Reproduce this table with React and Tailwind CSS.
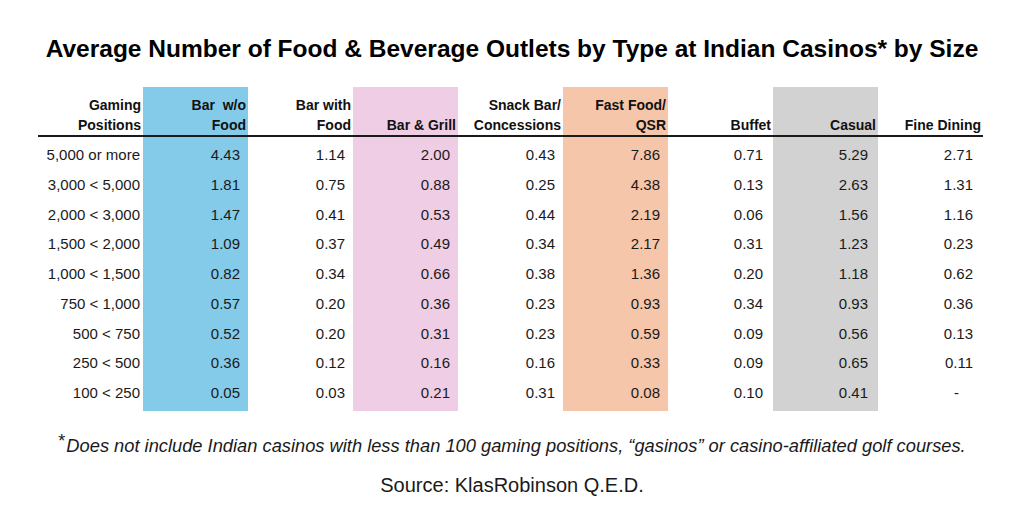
import React from "react";

const cols = [
  { h: ["Gaming", "Positions"], bg: "" },
  { h: ["Bar\u00a0\u00a0w/o", "Food"], bg: "bg-[#84cbea]" },
  { h: ["Bar with", "Food"], bg: "" },
  { h: ["", "Bar & Grill"], bg: "bg-[#efcde5]" },
  { h: ["Snack Bar/", "Concessions"], bg: "" },
  { h: ["Fast Food/", "QSR"], bg: "bg-[#f6c6aa]" },
  { h: ["", "Buffet"], bg: "" },
  { h: ["", "Casual"], bg: "bg-[#d2d2d2]" },
  { h: ["", "Fine Dining"], bg: "" },
];

const rows = [
  ["5,000 or more", "4.43", "1.14", "2.00", "0.43", "7.86", "0.71", "5.29", "2.71"],
  ["3,000 < 5,000", "1.81", "0.75", "0.88", "0.25", "4.38", "0.13", "2.63", "1.31"],
  ["2,000 < 3,000", "1.47", "0.41", "0.53", "0.44", "2.19", "0.06", "1.56", "1.16"],
  ["1,500 < 2,000", "1.09", "0.37", "0.49", "0.34", "2.17", "0.31", "1.23", "0.23"],
  ["1,000 < 1,500", "0.82", "0.34", "0.66", "0.38", "1.36", "0.20", "1.18", "0.62"],
  ["750 < 1,000", "0.57", "0.20", "0.36", "0.23", "0.93", "0.34", "0.93", "0.36"],
  ["500 < 750", "0.52", "0.20", "0.31", "0.23", "0.59", "0.09", "0.56", "0.13"],
  ["250 < 500", "0.36", "0.12", "0.16", "0.16", "0.33", "0.09", "0.65", "0.11"],
  ["100 < 250", "0.05", "0.03", "0.21", "0.31", "0.08", "0.10", "0.41", "-"],
];

export default function App() {
  return (
    <div className="w-[1024px] h-[532px] bg-white text-[#1a1a1a] font-['Liberation_Sans',Arial,sans-serif] flex flex-col items-center overflow-hidden">
      <div className="mt-[34px] h-[30px] leading-[30px] text-[24.5px] font-bold text-black whitespace-nowrap">
        Average Number of Food &amp; Beverage Outlets by Type at Indian Casinos* by Size
      </div>
      <div className="mt-[23px] ml-[-3px] flex">
        {cols.map((c, ci) => (
          <div key={ci} className="w-[105px] flex flex-col">
            <div className={`h-[48px] flex flex-col justify-end items-end pr-[2px] text-[14px] font-bold leading-[20px] text-[#111] ${c.bg}`}>
              <div className="whitespace-nowrap">{c.h[0]}</div>
              <div className="whitespace-nowrap">{c.h[1]}</div>
            </div>
            <div className="h-[1.5px] bg-[#1a1a1a]" />
            <div className={`pt-[4px] pb-[3px] ${c.bg}`}>
              {rows.map((r, ri) => (
                <div
                  key={ri}
                  className={`h-[29.75px] flex items-center text-[15px] whitespace-nowrap ${
                    ci === 0
                      ? "justify-end pr-[3px]"
                      : ci === 8 && r[ci] === "-"
                      ? "justify-end pr-[24px]"
                      : ci >= 6
                      ? "justify-end pr-[10px]"
                      : "justify-end pr-[8px]"
                  }`}
                >
                  {r[ci]}
                </div>
              ))}
            </div>
          </div>
        ))}
      </div>
      <div className="mt-[22px] h-[26px] leading-[26px] text-[18.3px] italic whitespace-nowrap">
        <span className="relative top-[-5px] not-italic text-[18px] mr-[1px]">*</span>Does not include Indian casinos with less than 100 gaming positions, “gasinos” or casino-affiliated golf courses.
      </div>
      <div className="mt-[13px] h-[26px] leading-[26px] text-[20px] whitespace-nowrap">
        Source: KlasRobinson Q.E.D.
      </div>
    </div>
  );
}
